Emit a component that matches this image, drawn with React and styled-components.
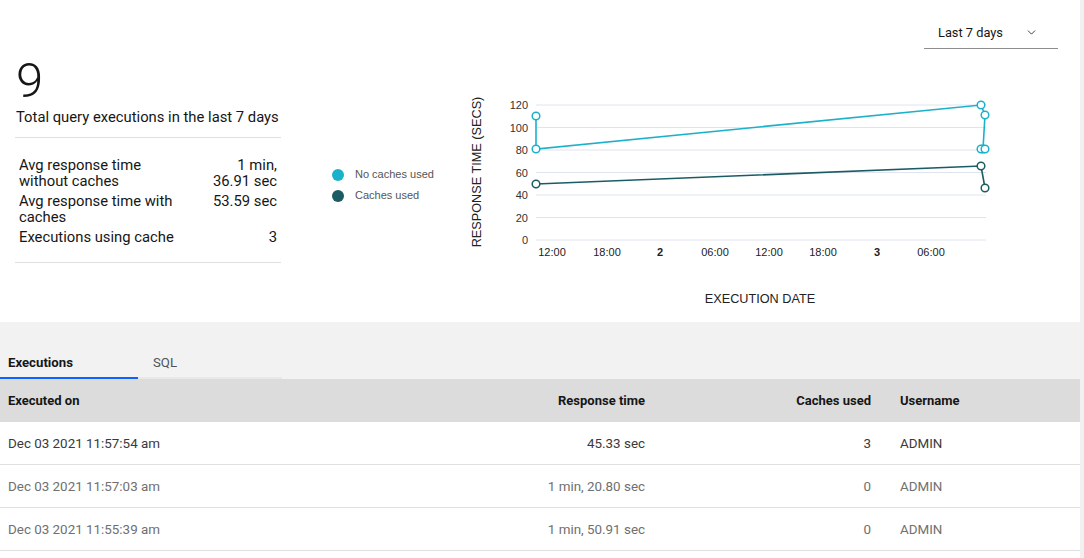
import React from "react";
import styled, { createGlobalStyle } from "styled-components";
import { ChevronDown } from "lucide-react";

const GlobalStyle = createGlobalStyle`
  html, body {
    margin: 0;
    padding: 0;
    background: #ffffff;
    overflow: hidden;
  }
  body {
    font-family: Roboto, "Liberation Sans", sans-serif;
    color: #161616;
  }
`;

const Page = styled.div`
  display: flex;
  width: 1084px;
  height: 558px;
`;

const Main = styled.div`
  flex: 1;
  display: flex;
  flex-direction: column;
  min-width: 0;
`;

const ScrollTrack = styled.div`
  width: 4px;
  background: #f1f1f1;
`;

const Overview = styled.section`
  height: 322px;
  display: flex;
  flex-direction: column;
`;

const Toolbar = styled.div`
  display: flex;
  justify-content: flex-end;
  padding: 18px 22px 0 0;
`;

const Dropdown = styled.button`
  width: 134px;
  height: 31px;
  display: flex;
  align-items: center;
  justify-content: space-between;
  padding: 0 20px 2px 14px;
  border: none;
  border-bottom: 1px solid #8d8d8d;
  background: transparent;
  font-family: inherit;
  font-size: 12.8px;
  color: #161616;
`;

const Content = styled.div`
  display: flex;
  align-items: flex-start;
`;

const Stats = styled.div`
  margin-left: 15px;
  width: 266px;
  margin-top: 8px;
`;

const BigNumber = styled.div`
  font-size: 49px;
  font-weight: 300;
  line-height: 48px;
  padding-left: 1px;
`;

const Caption = styled.div`
  font-size: 14.8px;
  line-height: 18px;
  padding: 3px 0 11px 1px;
  border-bottom: 1px solid #e0e0e0;
`;

const StatList = styled.div`
  display: flex;
  flex-direction: column;
  gap: 4px;
  padding: 19px 4px 17px 4px;
  border-bottom: 1px solid #e0e0e0;
`;

const StatRow = styled.div`
  display: flex;
  justify-content: space-between;
  font-size: 14.8px;
  line-height: 16px;
`;

const StatLabel = styled.span`
  width: 165px;
`;

const StatValue = styled.span`
  text-align: right;
`;

const Legend = styled.div`
  width: 128px;
  margin-left: 51px;
  margin-top: 119px;
  display: flex;
  flex-direction: column;
  gap: 8px;
`;

const LegendItem = styled.div`
  display: flex;
  align-items: center;
  gap: 11px;
  font-family: "Liberation Sans", Arial, sans-serif;
  font-size: 11px;
  color: #555555;
  line-height: 13px;
`;

const Dot = styled.span`
  width: 12px;
  height: 12px;
  border-radius: 50%;
  background: ${(p) => p.$color};
`;

const Chart = styled.svg`
  display: block;
  margin-top: 40px;
  font-family: "Liberation Sans", Arial, sans-serif;
`;

const Details = styled.section`
  flex: 1;
  display: flex;
  flex-direction: column;
`;

const TabBar = styled.div`
  background: #f2f2f2;
  height: 57px;
  display: flex;
  align-items: flex-end;
`;

const Tab = styled.div`
  width: ${(p) => p.$width}px;
  height: 38px;
  box-sizing: border-box;
  display: flex;
  align-items: center;
  padding: 6px 0 0 ${(p) => p.$pad}px;
  font-size: 13.2px;
  font-weight: ${(p) => (p.$active ? 700 : 400)};
  color: ${(p) => (p.$active ? "#161616" : "#525252")};
  border-bottom: 2px solid ${(p) => (p.$active ? "#0f62fe" : "#e8e8e8")};
`;

const Table = styled.div`
  display: grid;
  grid-template-columns: 465px 196px 223px 1fr;
`;

const HeadCell = styled.div`
  height: 43px;
  background: #dcdcdc;
  display: flex;
  align-items: center;
  justify-content: ${(p) => (p.$right ? "flex-end" : "flex-start")};
  padding: ${(p) => p.$pad};
  font-size: 13px;
  font-weight: 700;
  color: #161616;
`;

const Cell = styled.div`
  height: 42px;
  border-bottom: 1px solid #e0e0e0;
  display: flex;
  align-items: center;
  justify-content: ${(p) => (p.$right ? "flex-end" : "flex-start")};
  padding: ${(p) => p.$pad};
  font-size: 13.4px;
  font-weight: 400;
  color: ${(p) => (p.$strong ? "#3a3a3a" : "#707070")};
`;

const COLUMNS = [
  { key: "on", title: "Executed on", pad: "0 0 0 8px" },
  { key: "time", title: "Response time", pad: "0 16px 0 0", right: true },
  { key: "caches", title: "Caches used", pad: "0 13px 0 0", right: true },
  { key: "user", title: "Username", pad: "0 0 0 16px" },
];

const ROWS = [
  { on: "Dec 03 2021 11:57:54 am", time: "45.33 sec", caches: "3", user: "ADMIN" },
  { on: "Dec 03 2021 11:57:03 am", time: "1 min, 20.80 sec", caches: "0", user: "ADMIN" },
  { on: "Dec 03 2021 11:55:39 am", time: "1 min, 50.91 sec", caches: "0", user: "ADMIN" },
];

const CYAN = "#1cb1cb";
const TEAL = "#1b5c64";

const yOf = (v) => 239 - v * 1.125;
const TICKS = [0, 20, 40, 60, 80, 100, 120];
const X_LABELS = [
  { x: 552, t: "12:00" },
  { x: 607, t: "18:00" },
  { x: 660, t: "2", bold: true },
  { x: 715, t: "06:00" },
  { x: 769, t: "12:00" },
  { x: 823, t: "18:00" },
  { x: 877, t: "3", bold: true },
  { x: 931, t: "06:00" },
];

const NO_CACHE = [
  [536, 115],
  [536, 148],
  [981, 104],
  [985, 114],
  [983, 148],
  [981, 148],
  [985, 148],
];
const WITH_CACHE = [
  [536, 183],
  [981, 165],
  [985, 187],
];

const Series = ({ points, color }) => (
  <g>
    <polyline
      points={points.map((p) => p.join(",")).join(" ")}
      fill="none"
      stroke={color}
      strokeWidth="1.6"
    />
    {points.map(([x, y], i) => (
      <circle key={i} cx={x} cy={y} r="3.8" fill="#fff" stroke={color} strokeWidth="1.5" />
    ))}
  </g>
);

const ResponseChart = () => (
  <Chart width="540" height="230" viewBox="460 88 540 230">
    {TICKS.map((v) => (
      <g key={v}>
        <line x1="536" x2="986" y1={yOf(v)} y2={yOf(v)} stroke="#dfe4ee" strokeWidth="1" />
        <text x="528" y={yOf(v) + 4} textAnchor="end" fontSize="11" fill="#333">
          {v}
        </text>
      </g>
    ))}
    {X_LABELS.map((l, i) => (
      <text
        key={i}
        x={l.x}
        y="255"
        textAnchor="middle"
        fontSize="11"
        fontWeight={l.bold ? 700 : 400}
        fill="#222"
      >
        {l.t}
      </text>
    ))}
    <text
      transform="translate(481 171) rotate(-90)"
      textAnchor="middle"
      fontSize="12.7"
      fill="#222"
    >
      RESPONSE TIME (SECS)
    </text>
    <text x="760" y="302" textAnchor="middle" fontSize="12.7" fill="#222">
      EXECUTION DATE
    </text>
    <Series points={NO_CACHE} color={CYAN} />
    <Series points={WITH_CACHE} color={TEAL} />
  </Chart>
);

const App = () => {
  return (
    <Page>
      <GlobalStyle />
      <Main>
        <Overview>
          <Toolbar>
            <Dropdown>
              <span>Last 7 days</span>
              <ChevronDown size={13} strokeWidth={1.5} color="#161616" />
            </Dropdown>
          </Toolbar>
          <Content>
            <Stats>
              <BigNumber>9</BigNumber>
              <Caption>Total query executions in the last 7 days</Caption>
              <StatList>
                <StatRow>
                  <StatLabel>Avg response time without caches</StatLabel>
                  <StatValue>
                    1 min,
                    <br />
                    36.91 sec
                  </StatValue>
                </StatRow>
                <StatRow>
                  <StatLabel>Avg response time with caches</StatLabel>
                  <StatValue>53.59 sec</StatValue>
                </StatRow>
                <StatRow>
                  <StatLabel>Executions using cache</StatLabel>
                  <StatValue>3</StatValue>
                </StatRow>
              </StatList>
            </Stats>
            <Legend>
              <LegendItem>
                <Dot $color={CYAN} />
                No caches used
              </LegendItem>
              <LegendItem>
                <Dot $color={TEAL} />
                Caches used
              </LegendItem>
            </Legend>
            <ResponseChart />
          </Content>
        </Overview>
        <Details>
          <TabBar>
            <Tab $active $width={138} $pad={8}>
              Executions
            </Tab>
            <Tab $width={144} $pad={15}>
              SQL
            </Tab>
          </TabBar>
          <Table>
            {COLUMNS.map((c) => (
              <HeadCell key={c.key} $right={c.right} $pad={c.pad}>
                {c.title}
              </HeadCell>
            ))}
            {ROWS.map((r, i) =>
              COLUMNS.map((c) => (
                <Cell key={i + c.key} $right={c.right} $pad={c.pad} $strong={i === 0}>
                  {r[c.key]}
                </Cell>
              ))
            )}
          </Table>
        </Details>
      </Main>
      <ScrollTrack />
    </Page>
  );
};

export default App;
